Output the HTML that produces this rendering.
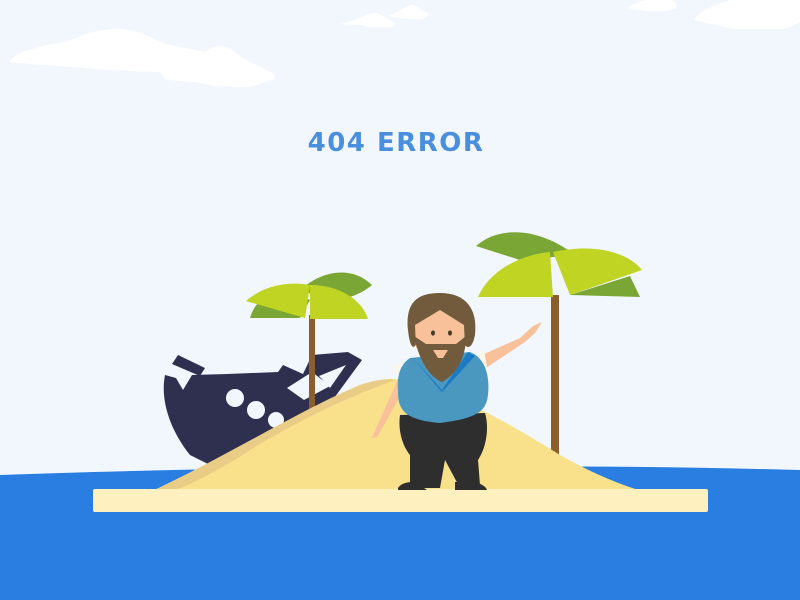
<!DOCTYPE html>
<html><head><meta charset="utf-8"><style>
html,body{margin:0;padding:0;width:800px;height:600px;overflow:hidden;background:#f1f7fd}
.t{position:absolute;left:0;width:792px;top:128px;text-align:center;font-family:"DejaVu Sans","Liberation Sans",sans-serif;font-weight:bold;font-size:26px;color:#4a8ede;letter-spacing:1.5px}
svg{position:absolute;left:0;top:0}
</style></head><body>
<svg width="800" height="600" viewBox="0 0 800 600">
<path d="M9,62 C14,52 40,46 65,42 C80,38 90,29 120,29 C140,30 150,38 165,44 L205,52 C212,47 215,46 222,46 C230,46 236,54 246,60 C258,67 277,72 275,79 L250,87 C235,87 215,87 205,84 C195,81 180,82 165,79 L160,72 C120,71 95,69 75,67 C55,66 30,64 9,62Z" fill="#fff"/>
<path d="M340,24 C355,21 365,15 372,13 C380,12 385,18 392,21 C396,24 395,27 392,27 L368,27 L363,25 Z" fill="#fff"/>
<path d="M388,16 C398,12 404,8 410,5 C416,4 420,10 427,13 C430,16 425,20 414,19 L398,18 Z" fill="#fff"/>
<path d="M627,8 C635,3 642,0 650,0 L672,0 C676,3 679,6 675,9 L665,11 L645,11 Z" fill="#fff"/>
<path d="M694,20 C698,12 712,6 730,0 L800,0 L800,22 C795,25 790,28 782,29 L735,29 C725,27 715,25 694,20Z" fill="#fff"/>
<path d="M0,475 C200,468 500,462 800,470 L800,600 L0,600Z" fill="#2a7de1"/>
<g fill="#2f3050">
<path d="M165,375 L176,378 L183,390 L192,375 L227,374 L278,372 L283,365 L303,374 L312,355 L348,352 L362,360 L318,420 L300,440 L210,465 L190,455 C170,430 160,400 165,375Z"/>
<path d="M178,355 L205,368 L200,376 L172,364Z"/>
</g>
<g fill="#f1f7fd">
<circle cx="235" cy="398" r="9"/><circle cx="256" cy="410" r="9"/><circle cx="276" cy="420" r="8"/>
<path d="M287,388 L312,372 L330,386 L304,400Z"/>
<path d="M319,376 L346,365 L330,388Z"/>
</g>
<rect x="309" y="315" width="6" height="95" fill="#8b5e2b"/>
<path d="M300,290 C320,272 350,264 372,285 C360,295 345,300 330,300 Z" fill="#7aa636"/>
<path d="M250,318 C255,300 270,292 285,288 L310,300 L300,318Z" fill="#7aa636"/>
<path d="M246,301 C270,280 300,283 310,285 L305,318 Z" fill="#c0d423"/>
<path d="M310,285 C340,285 362,300 368,319 L310,319 Z" fill="#c0d423"/>
<rect x="551" y="295" width="8" height="160" fill="#8b5e2b"/>
<path d="M476,246 C500,225 540,228 575,255 L520,260Z" fill="#7aa636"/>
<path d="M478,297 C490,270 520,255 550,252 L553,297Z" fill="#c0d423"/>
<path d="M553,252 C600,242 630,255 642,270 L570,295 Z" fill="#c0d423"/>
<path d="M570,295 L630,276 L640,297 Z" fill="#7aa636"/>
<path d="M150,492 C220,460 300,410 360,385 C380,378 395,378 410,380 C470,400 520,430 560,455 C590,472 620,485 645,492Z" fill="#f9e08a"/>
<path d="M150,492 C220,460 300,410 360,385 C375,380 390,378 395,380 C340,400 300,420 250,450 C220,470 190,485 170,492Z" fill="#e9cd87"/>
<rect x="93" y="489" width="615" height="23" rx="2" fill="#fff0c0"/>
<path d="M482,355 L520,338 L533,326 L542,322 L535,333 L525,342 L486,368Z" fill="#f8c19a"/>
<path d="M478,352 L484,350 L488,372 L483,374Z" fill="#fbf7e8"/>
<path d="M402,370 L382,415 L372,438 L377,437 L388,418 L410,378Z" fill="#f8c19a"/>
<path d="M404,364 L395,365 L393,373 L401,374Z" fill="#fbf7e8"/>
<path d="M400,415 L485,413 C490,430 485,450 478,460 L480,485 L470,488 L460,488 L445,460 L440,488 L410,488 L410,455 C402,445 398,430 400,415Z" fill="#2e2e2e"/>
<path d="M398,488 C402,482 410,482 415,482 L427,490 L398,490Z M455,482 L475,482 C482,484 486,487 487,490 L455,490Z" fill="#2e2e2e"/>
<path d="M410,358 L470,352 C485,358 490,375 488,395 C486,410 480,418 440,423 C405,420 398,410 398,392 C397,375 400,365 410,358Z" fill="#4a98c0"/>
<path d="M412,357 L442,390 L468,352 L475,356 L442,392 L440,390 Z" fill="#1a7ac4"/>
<path d="M408,330 C405,300 420,293 440,293 C465,293 478,308 475,335 C472,350 466,350 462,340 L418,340 C414,352 410,348 408,330Z" fill="#725b3d"/>
<path d="M440,310 L415,325 L416,348 L465,348 L464,325 Z" fill="#f8c19a"/>
<path d="M414,336 C420,365 432,378 442,382 C455,375 466,360 466,336 L456,344 L426,344 Z" fill="#725b3d"/>
<path d="M433,350 L448,350 L443,358 L438,358Z" fill="#f8c19a"/>
<ellipse cx="433" cy="333" rx="2" ry="2.6" fill="#4a3a2a"/>
<ellipse cx="450" cy="333" rx="2" ry="2.6" fill="#4a3a2a"/>
</svg>
<div class="t">404 ERROR</div>
</body></html>
